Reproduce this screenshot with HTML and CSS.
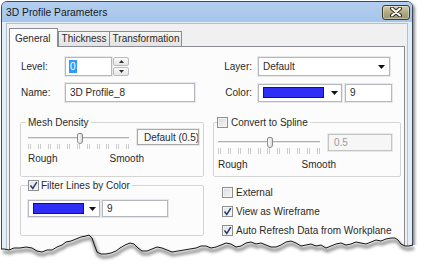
FILE: index.html
```html
<!DOCTYPE html>
<html>
    <head>
        <link rel="stylesheet" href="styles.css">
    </head>
    <body>
    <div class="stage">
        <div class="window">
            <div class="titlebar">
                <span class="title">3D Profile Parameters</span>
                <span class="close">
                    <svg width="14" height="10" viewBox="0 0 14 10">
                        <path d="M3 1.5 L11 8.5 M11 1.5 L3 8.5" stroke="#2b2b22" stroke-width="4" stroke-linecap="round"/>
                        <path d="M3 1.5 L11 8.5 M11 1.5 L3 8.5" stroke="#fff" stroke-width="2" stroke-linecap="round"/>
                    </svg>
                </span>
            </div>
            <div class="client">
                <div class="tabs">
                    <span class="tab active">General</span>
                    <span class="tab">Thickness</span>
                    <span class="tab">Transformation</span>
                </div>
                <div class="panel">
                    <div class="form">
                        <!-- row 1 -->
                        <div class="row">
                            <span class="lbl">Level:</span>
                            <div class="field level"><span class="sel">0</span></div>
                            <div class="spinbtns">
                                <span class="sb"><svg width="5" height="3"><path d="M0 3 L2.5 0 L5 3Z" fill="#333"/></svg></span>
                                <span class="sb"><svg width="5" height="3"><path d="M0 0 L2.5 3 L5 0Z" fill="#333"/></svg></span>
                            </div>
                        </div>
                        <div class="row">
                            <span class="lbl r">Layer:</span>
                            <div class="field select">Default<svg class="arrow" width="7" height="4"><path d="M0 0 L7 0 L3.5 4Z" fill="#111"/></svg></div>
                        </div>
                        <!-- row 2 -->
                        <div class="row row2">
                            <span class="lbl">Name:</span>
                            <div class="field name">3D Profile_8</div>
                        </div>
                        <div class="row row2">
                            <span class="lbl r">Color:</span>
                            <div class="field combo top-combo"><span class="swatch"></span><svg class="arrow" width="7" height="4"><path d="M0 0 L7 0 L3.5 4Z" fill="#111"/></svg></div>
                            <div class="field num">9</div>
                        </div>
                        <!-- groups -->
                        <fieldset class="group mesh">
                            <legend>Mesh Density</legend>
                            <div class="slide-row">
                                <div class="slider">
                                    <div class="track"><span class="thumb"></span></div>
                                    <div class="ticks"><i></i><i></i><i></i><i></i><i></i><i></i><i></i><i></i><i></i><i></i><i></i></div>
                                    <div class="scale"><span>Rough</span><span>Smooth</span></div>
                                </div>
                                <div class="field readout">Default (0.5)</div>
                            </div>
                        </fieldset>
                        <fieldset class="group spline">
                            <legend><span class="cb"></span>Convert to Spline</legend>
                            <div class="slide-row">
                                <div class="slider">
                                    <div class="track"><span class="thumb"></span></div>
                                    <div class="ticks"><i></i><i></i><i></i><i></i><i></i><i></i><i></i><i></i><i></i><i></i><i></i></div>
                                    <div class="scale"><span>Rough</span><span>Smooth</span></div>
                                </div>
                                <div class="field readout off">0.5</div>
                            </div>
                        </fieldset>
                        <!-- bottom -->
                        <fieldset class="group filter">
                            <legend><span class="cb on"><svg width="9" height="9"><path d="M1.5 4.5 L3.8 7.5 L7.8 1.2" stroke="#233a78" stroke-width="1.5" fill="none"/></svg></span>Filter Lines by Color</legend>
                            <div class="color-row">
                                <div class="field combo low-combo"><span class="swatch"></span><svg class="arrow" width="7" height="4"><path d="M0 0 L7 0 L3.5 4Z" fill="#111"/></svg></div>
                                <div class="field num wide">9</div>
                            </div>
                        </fieldset>
                        <div class="checks">
                            <div class="chk"><span class="cb"></span>External</div>
                            <div class="chk"><span class="cb on"><svg width="9" height="9"><path d="M1.5 4.5 L3.8 7.5 L7.8 1.2" stroke="#233a78" stroke-width="1.5" fill="none"/></svg></span>View as Wireframe</div>
                            <div class="chk"><span class="cb on"><svg width="9" height="9"><path d="M1.5 4.5 L3.8 7.5 L7.8 1.2" stroke="#233a78" stroke-width="1.5" fill="none"/></svg></span>Auto Refresh Data from Workplane</div>
                        </div>
                    </div>
                </div>
            </div>
        </div>
        <!-- torn paper edge over the bottom of the dialog -->
        <svg class="tear" width="421" height="264" viewBox="0 0 421 264">
            <defs>
                <filter id="soft" x="-5%" y="-50%" width="110%" height="200%"><feGaussianBlur stdDeviation="1.4"/></filter>
            </defs>
            <polygon fill="#fff" points="0,249 4,249 9,250 14,248 20,248 26,247 32,248 37,251 42,252 47,250 52,250 57,247 62,245 66,242 71,241 76,239 81,237 86,236 89,235 92,238 94,244 97,252 101,254 106,254 111,253 116,251 120,248 125,245 130,243 134,244 138,248 142,251 147,251 152,249 157,247 162,248 167,250 172,252 178,251 184,250 190,249 196,248 201,246 206,246 211,248 216,247 221,245 226,243 231,244 236,247 241,246 246,243 251,242 256,244 261,243 266,245 271,247 276,247 281,245 286,242 291,241 296,243 301,246 306,245 311,244 316,246 321,245 326,248 331,246 336,244 341,243 346,245 351,244 356,242 361,243 366,244 371,242 376,240 381,241 386,239 391,238 395,238 398,240 401,244 405,246 409,246 413,245 421,245 421,264 0,264"/>
            <polyline class="shade" filter="url(#soft)" transform="translate(1,3)" points="2,249 4,249 9,250 14,248 20,248 26,247 32,248 37,251 42,252 47,250 52,250 57,247 62,245 66,242 71,241 76,239 81,237 86,236 89,235 92,238 94,244 97,252 101,254 106,254 111,253 116,251 120,248 125,245 130,243 134,244 138,248 142,251 147,251 152,249 157,247 162,248 167,250 172,252 178,251 184,250 190,249 196,248 201,246 206,246 211,248 216,247 221,245 226,243 231,244 236,247 241,246 246,243 251,242 256,244 261,243 266,245 271,247 276,247 281,245 286,242 291,241 296,243 301,246 306,245 311,244 316,246 321,245 326,248 331,246 336,244 341,243 346,245 351,244 356,242 361,243 366,244 371,242 376,240 381,241 386,239 391,238 395,238 398,240 401,244 405,246 409,246 413,245"/>
            <polyline class="edge" points="1,249 4,249 9,250 14,248 20,248 26,247 32,248 37,251 42,252 47,250 52,250 57,247 62,245 66,242 71,241 76,239 81,237 86,236 89,235 92,238 94,244 97,252 101,254 106,254 111,253 116,251 120,248 125,245 130,243 134,244 138,248 142,251 147,251 152,249 157,247 162,248 167,250 172,252 178,251 184,250 190,249 196,248 201,246 206,246 211,248 216,247 221,245 226,243 231,244 236,247 241,246 246,243 251,242 256,244 261,243 266,245 271,247 276,247 281,245 286,242 291,241 296,243 301,246 306,245 311,244 316,246 321,245 326,248 331,246 336,244 341,243 346,245 351,244 356,242 361,243 366,244 371,242 376,240 381,241 386,239 391,238 395,238 398,240 401,244 405,246 409,246 413,245"/>
        </svg>
    </div>
    </body>
</html>
```

FILE: styles.css
```css
* {
    box-sizing: border-box;
}
body {
    margin: 0;
    background: #fff;
    font-family: "Liberation Sans", Arial, sans-serif;
    font-size: 10px;
    color: #2a2a2a;
}
.stage {
    position: relative;
    width: 421px;
    height: 264px;
    overflow: hidden;
}

/* window frame */
.window {
    margin: 1px 0 0 1px;
    width: 412px;
    height: 270px;
    border: 1px solid #3d4a5a;
    border-radius: 6px 6px 0 0;
    background: #e4ecf5;
    padding: 0 4px;
    box-shadow: 2px 2px 3px rgba(0, 0, 0, .45);
    display: flex;
    flex-direction: column;
}
.titlebar {
    margin: 0 -4px;
    height: 20px;
    background: linear-gradient(#b3cff0, #a5c5ea);
    border-radius: 5px 5px 0 0;
    display: flex;
    align-items: center;
    justify-content: space-between;
    padding: 0 2px 0 4px;
}
.title {
    font-size: 10.3px;
    color: #1a1a1a;
}
.close {
    width: 28px;
    height: 15px;
    border: 1px solid #3c3b2c;
    border-radius: 3px;
    background: linear-gradient(#d5cfa9, #b2aa80 50%, #9c9570);
    display: flex;
    align-items: center;
    justify-content: center;
    box-shadow: inset 0 0 0 1px rgba(255, 255, 255, .35);
}
.client {
    flex: 1;
    margin-top: 1px;
    border: 1px solid #b4c0cd;
    background: #f0f0f0;
    padding: 4px 2px 0 2px;
    display: flex;
    flex-direction: column;
}

/* tabs */
.tabs {
    display: flex;
    align-items: flex-end;
    height: 18px;
    position: relative;
    z-index: 1;
}
.tab {
    height: 15px;
    border: 1px solid #898c95;
    border-bottom: none;
    background: linear-gradient(#f4f4f4, #e2e2e2);
    padding: 0 2px 0 3px;
    line-height: 14px;
    margin-left: -1px;
}
.tab.active {
    height: 19px;
    margin-bottom: -1px;
    margin-left: 0;
    margin-right: 1px;
    background: #fcfcfc;
    padding: 0 6px 0 5px;
    line-height: 19px;
}
.panel {
    flex: 1;
    border: 1px solid #898c95;
    background: #fcfcfc;
    padding: 10px 0 0 10px;
}

/* form layout */
.form {
    display: grid;
    grid-template-columns: 184px 188px;
    column-gap: 9px;
}
.row {
    display: flex;
    align-items: center;
    height: 19px;
}
.row2 {
    margin-top: 7px;
}
.lbl {
    width: 45px;
    padding-left: 1px;
}
.lbl.r {
    width: 39px;
    padding: 0;
    margin-right: 6px;
    text-align: right;
}
.field {
    height: 19px;
    border: 1px solid #b4b7be;
    box-shadow: 0 0 0 1px #e8e8e8;
    background: #fff;
    display: flex;
    align-items: center;
    padding: 0 4px;
    white-space: nowrap;
    overflow: hidden;
}
.level {
    width: 47px;
    padding-left: 3px;
}
.sel {
    background: #3399ff;
    color: #fff;
    line-height: 13px;
    padding: 0 1px;
}
.spinbtns {
    margin-left: 1px;
    width: 16px;
    height: 19px;
    display: flex;
    flex-direction: column;
    gap: 1px;
}
.sb {
    flex: 1;
    border: 1px solid #b9bcc2;
    border-radius: 2px;
    background: linear-gradient(#fafafa, #e6e6e6);
    display: flex;
    align-items: center;
    justify-content: center;
}
.select {
    width: 132px;
    justify-content: space-between;
    padding-right: 4px;
}
.name {
    width: 130px;
}
.combo {
    padding: 0 3px 0 4px;
    justify-content: space-between;
}
.top-combo {
    width: 84px;
    height: 18px;
}
.swatch {
    width: 61px;
    height: 11px;
    border: 1px solid #1c1c30;
    background: #2e2ef6;
}
.num {
    width: 47px;
    height: 18px;
    margin-left: 3px;
}

/* group boxes */
.group {
    margin: 14px 0 0;
    border: 1px solid #d3d3d3;
    border-radius: 2px;
    box-shadow: inset 1px 1px 0 #fff, 1px 1px 0 #fff;
    min-width: 0;
}
.group legend {
    line-height: 13px;
    height: 13px;
    display: flex;
    align-items: center;
}
.mesh {
    padding: 0 3px 8px 7px;
}
.mesh legend {
    padding: 0 2px;
    margin-left: -2px;
}
.spline {
    padding: 5px 3px 5px 4px;
}
.spline legend {
    padding: 0 2px 0 0;
    margin-left: -1px;
    gap: 3px;
}
.slide-row {
    display: flex;
    align-items: flex-start;
}
.slider {
    width: 101px;
    margin-top: 4px;
}
.spline .slider {
    width: 102px;
    margin-top: 3px;
}
.track {
    position: relative;
    height: 11px;
    background: linear-gradient(transparent 4px, #b0b0b0 4px, #b0b0b0 5px, #e7e7e7 5px, #e7e7e7 6px, #fff 6px, #fff 7px, transparent 7px);
}
.thumb {
    position: absolute;
    left: 49px;
    top: 0;
    width: 6px;
    height: 11px;
    border: 1px solid #8a8a8a;
    border-radius: 2px 2px 3px 3px;
    background: linear-gradient(90deg, #fdfdfd, #dcdcdc);
}
.ticks {
    display: flex;
    justify-content: space-between;
    height: 5px;
}
.spline .ticks {
    height: 6px;
}
.ticks i {
    width: 3px;
    border-left: 1px solid #cdcdcd;
    border-right: 1px solid #cdcdcd;
}
.scale {
    width: 116px;
    display: flex;
    justify-content: space-between;
    margin-top: 4px;
    line-height: 12px;
}
.spline .scale {
    width: 118px;
    margin-top: 5px;
}
.readout {
    margin-left: 8px;
    width: 62px;
    height: 16px;
    padding-left: 6px;
    background: #fafafa;
    border-color: #a9a9a9;
}
.spline .readout {
    width: 64px;
    height: 17px;
    padding-left: 5px;
}
.readout.off {
    color: #9b9b9b;
    background: #f6f6f6;
    border-color: #c4c4c4;
}

.filter {
    margin-top: 2px;
    padding: 8px 3px 17px 7px;
}
.filter legend {
    padding: 0 2px 0 0;
    margin-left: 0;
    gap: 2px;
}
.color-row {
    display: flex;
}
.low-combo {
    width: 72px;
    height: 17px;
}
.low-combo .swatch {
    width: 51px;
}
.num.wide {
    width: 66px;
    height: 17px;
    margin-left: 2px;
}

/* check boxes */
.cb {
    width: 11px;
    height: 11px;
    border: 1px solid #8e8f8f;
    background: linear-gradient(135deg, #d9d9d9, #f7f7f7);
    box-shadow: inset 0 0 0 1px #f4f4f4;
    display: inline-flex;
    align-items: center;
    justify-content: center;
}
.cb.on {
    background: linear-gradient(135deg, #e2e2e2, #fafafa);
}
.checks {
    margin-top: 2px;
    padding: 7px 0 0 9px;
    display: flex;
    flex-direction: column;
    gap: 7px;
}
.chk {
    display: flex;
    align-items: center;
    gap: 3px;
    height: 12px;
}

/* torn edge */
.tear {
    position: absolute;
    left: 0;
    top: 0;
}
.tear .shade {
    fill: none;
    stroke: #444;
    stroke-width: 3;
    opacity: .6;
}
.tear .edge {
    fill: none;
    stroke: #161616;
    stroke-width: 1;
}
```
